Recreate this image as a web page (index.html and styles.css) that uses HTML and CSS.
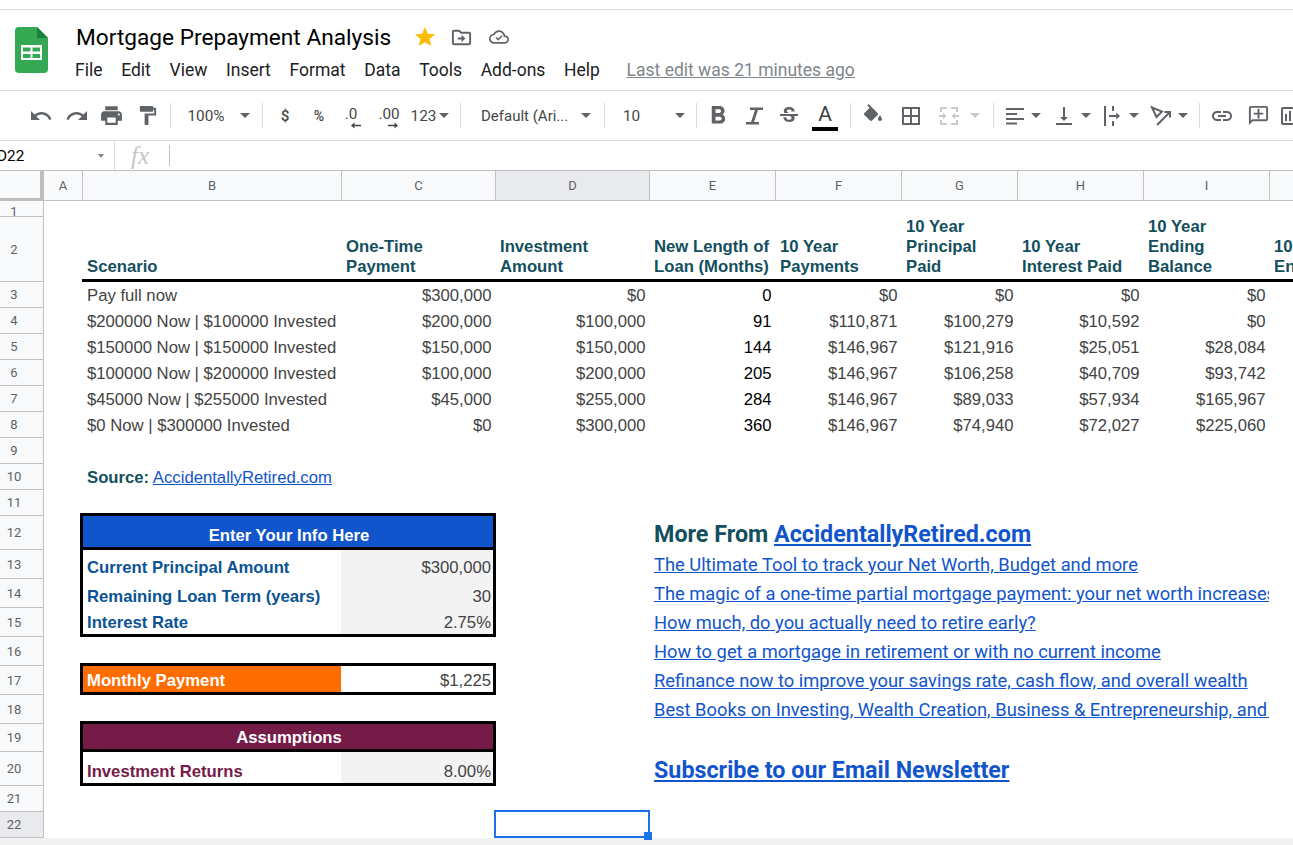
FILE: index.html
```html
<!DOCTYPE html>
<html lang="en">
<head>
<meta charset="utf-8">
<title>Mortgage Prepayment Analysis</title>
<link rel="stylesheet" href="styles.css">
</head>
<body>
<div class="app">
  <header class="head">
    <svg class="logo" viewBox="0 0 33 46"><path class="lg" d="M4 0H22L33 11V42a4 4 0 0 1-4 4H4a4 4 0 0 1-4-4V4a4 4 0 0 1 4-4z"/><path class="ld" d="M22 0L33 11H22z"/><path class="lw" d="M6 18H27V33H6zM8 20.500V24.500H15.500V20.500zM17.500 20.500V24.500H25V20.500zM8 27V31H15.500V27zM17.500 27V31H25V27z" fill-rule="evenodd"/></svg>
    <div class="titles">
      <div class="titlerow">
        <h1 class="title">Mortgage Prepayment Analysis</h1>
        <svg class="star" viewBox="0 0 24 24"><path d="M12 17.270L18.180 21l-1.640-7.030L22 9.240l-7.190-.610L12 2 9.190 8.630 2 9.240l5.460 4.730L5.820 21z"/></svg>
        <svg class="folder" viewBox="0 0 24 24"><path d="M20 6h-8l-2-2H4c-1.100 0-2 .9-2 2v12c0 1.100.9 2 2 2h16c1.100 0 2-.9 2-2V8c0-1.100-.9-2-2-2zm0 12H4V6h5.170l2 2H20v10zm-8-4H8v-2h4V9l4 4-4 4v-3z"/></svg>
        <svg class="cloud" viewBox="0 0 24 24"><path d="M19.350 10.040C18.670 6.590 15.640 4 12 4 9.110 4 6.600 5.640 5.350 8.040 2.340 8.360 0 10.910 0 14c0 3.310 2.690 6 6 6h13c2.760 0 5-2.240 5-5 0-2.640-2.050-4.780-4.650-4.960zM19 18H6c-2.210 0-4-1.790-4-4 0-2.050 1.530-3.760 3.560-3.970l1.070-.110.5-.950C8.080 7.140 9.940 6 12 6c2.620 0 4.880 1.860 5.390 4.430l.3 1.500 1.530.110c1.560.1 2.780 1.410 2.780 2.960 0 1.650-1.350 3-3 3zm-8-1.500l-3.200-3.200 1.300-1.300 1.900 1.900 4.100-4.100 1.300 1.300z"/></svg>
      </div>
      <nav class="menu"><span>File</span><span>Edit</span><span>View</span><span>Insert</span><span>Format</span><span>Data</span><span>Tools</span><span>Add-ons</span><span>Help</span><span class="lastedit">Last edit was 21 minutes ago</span></nav>
    </div>
  </header>

  <div class="toolbar">
    <span class="t w36"><svg class="i24" viewBox="0 0 24 24"><path d="M12.500 8c-2.650 0-5.050.99-6.900 2.600L2 7v9h9l-3.620-3.620c1.390-1.160 3.160-1.880 5.120-1.880 3.540 0 6.550 2.310 7.600 5.500l2.370-.78C21.080 11.030 17.150 8 12.500 8z"/></svg></span>
    <span class="t w35"><svg class="i24" viewBox="0 0 24 24"><path d="M18.400 10.600C16.550 8.990 14.150 8 11.500 8c-4.650 0-8.580 3.030-9.960 7.220L3.900 16c1.050-3.190 4.050-5.500 7.600-5.500 1.950 0 3.730.72 5.120 1.880L13 16h9V7l-3.600 3.600z"/></svg></span>
    <span class="t w35"><svg class="i25" viewBox="0 0 24 24"><path d="M19 8H5c-1.660 0-3 1.340-3 3v6h4v4h12v-4h4v-6c0-1.660-1.340-3-3-3zm-3 11H8v-5h8v5zm3-7c-.55 0-1-.45-1-1s.45-1 1-1 1 .45 1 1-.45 1-1 1zm-1-9H6v4h12V3z"/></svg></span>
    <span class="t w36"><svg class="i23" viewBox="0 0 24 24"><path d="M18 4V3c0-.55-.45-1-1-1H5c-.55 0-1 .45-1 1v4c0 .55.45 1 1 1h12c.55 0 1-.45 1-1V6h1v4H9v11c0 .55.45 1 1 1h2c.55 0 1-.45 1-1v-9h8V4h-3z"/></svg></span>
    <span class="t w10"><i class="sep"></i></span>
    <span class="t w62 tx">100%</span>
    <span class="t w16"><i class="caret"></i></span>
    <span class="t w18"><i class="sep"></i></span>
    <span class="t w28 tx strong">$</span>
    <span class="w8"></span>
    <span class="t w24 tx strong sm">%</span>
    <span class="t w40 dec"><span class="tx">.0</span><svg class="arr arrl" viewBox="0 0 10 7"><path d="M10 2.700H3.500V.5L0 3.500 3.500 6.500V4.300H10z"/></svg></span>
    <span class="t w36 dec"><span class="tx">.00</span><svg class="arr arrr" viewBox="0 0 10 7"><path d="M0 2.700H6.500V.5L10 3.500 6.500 6.500V4.300H0z"/></svg></span>
    <span class="t w33 tx">123</span>
    <span class="t w8"><i class="caret"></i></span>
    <span class="t w24"><i class="sep"></i></span>
    <span class="t w106 tx lft fnt">Default (Ari...</span>
    <span class="t w16"><i class="caret"></i></span>
    <span class="t w20"><i class="sep"></i></span>
    <span class="t w58 tx lft">10</span>
    <span class="t w16"><i class="caret"></i></span>
    <span class="t w16"><i class="sep"></i></span>
    <span class="t w28"><svg class="i30" viewBox="0 0 24 24"><path d="M15.600 10.790c.97-.67 1.650-1.770 1.650-2.790 0-2.260-1.750-4-4-4H7v14h7.040c2.090 0 3.710-1.700 3.710-3.790 0-1.520-.86-2.820-2.150-3.420zM10 6.500h3c.83 0 1.500.67 1.500 1.500s-.67 1.500-1.500 1.500h-3v-3zm3.500 9H10v-3h3.500c.83 0 1.500.67 1.500 1.500s-.67 1.500-1.500 1.500z"/></svg></span>
    <span class="t w44"><svg class="i24" viewBox="0 0 24 24"><path d="M8 3.500h13v2.500h-5l-4 12h5v2.500H4V18h5l4-12H8z"/></svg></span>
    <span class="t w26"><svg class="i24" viewBox="0 0 24 24"><path d="M6.850 7.080C6.850 4.370 9.450 3 12.240 3c1.640 0 3 .49 3.900 1.280.77.65 1.460 1.730 1.460 3.240h-3.010c0-.31-.05-.59-.15-.85-.29-.86-1.200-1.280-2.250-1.280-1.860 0-2.340 1.020-2.340 1.700 0 .48.25.88.74 1.210.38.25.77.48 1.410.7H7.390c-.21-.34-.54-.89-.54-1.920zM21 12v-2H3v2h9.620c1.150.45 1.960.75 1.960 1.970 0 1-.81 1.670-2.280 1.670-1.540 0-2.930-.54-2.930-2.510H6.400c0 .55.08 1.130.24 1.580.81 2.290 3.290 3.300 5.670 3.300 2.270 0 5.300-.89 5.300-4.050 0-.3-.01-1.160-.48-1.940H21V12z"/></svg></span>
    <span class="t w46 colorA"><span class="Aglyph">A</span><i class="Abar"></i></span>
    <span class="t w4"><i class="sep"></i></span>
    <span class="t w42"><svg class="i24" viewBox="0 0 24 24"><path d="M16.560 8.940L7.620 0 6.210 1.410l2.380 2.380-5.150 5.150c-.59.59-.59 1.540 0 2.120l5.500 5.500c.29.29.68.44 1.060.44s.77-.15 1.060-.44l5.500-5.500c.59-.58.59-1.530 0-2.120zM19 11.500s-2 2.170-2 3.500c0 1.100.9 2 2 2s2-.9 2-2c0-1.330-2-3.500-2-3.500z"/></svg></span>
    <span class="t w34"><svg class="i24" viewBox="0 0 24 24"><path d="M3 3v18h18V3H3zm8 16H5v-6h6v6zm0-8H5V5h6v6zm8 8h-6v-6h6v6zm0-8h-6V5h6v6z"/></svg></span>
    <span class="t w42"><svg class="i24 dim" viewBox="0 0 24 24"><path d="M3 3h7v2H5v3H3zM14 3h7v5h-2V5h-5zM3 16h2v3h5v2H3zM19 16h2v5h-7v-2h5zM2 11h4V8.500L9.500 12 6 15.500V13H2zM22 11h-4V8.500L14.500 12l3.500 3.500V13h4z"/></svg></span>
    <span class="t w10"><i class="caret dimc"></i></span>
    <span class="t w26"><i class="sep"></i></span>
    <span class="t w18"><svg class="i18" viewBox="0 0 18 18"><path d="M0 1H18V3H0zM0 6H11V8H0zM0 11H18V13H0zM0 15.500H11V17.500H0z"/></svg></span>
    <span class="t w24"><i class="caret"></i></span>
    <span class="t w32"><svg class="i24" viewBox="0 0 24 24"><path d="M16 13h-3V3h-2v10H8l4 4 4-4zM4 19v2h16v-2H4z"/></svg></span>
    <span class="t w12"><i class="caret"></i></span>
    <span class="w6"></span>
    <span class="t w30"><svg class="i24" viewBox="0 0 24 24"><path d="M3 2h2v20H3zM11 2h2v5h-2zM11 17h2v5h-2zM8 11h7.200V8.500L19 12l-3.800 3.500V13H8z"/></svg></span>
    <span class="t w12"><i class="caret"></i></span>
    <span class="w6"></span>
    <span class="t w30"><svg class="i24 rot" viewBox="0 0 24 24"><path d="M3 3.500L13 7.500 7.500 13zM8 21L20 9M15.500 8H21V13.500"/></svg></span>
    <span class="t w14"><i class="caret"></i></span>
    <span class="t w18"><i class="sep"></i></span>
    <span class="t w28"><svg class="i24" viewBox="0 0 24 24"><path d="M3.900 12c0-1.710 1.390-3.100 3.100-3.100h4V7H7c-2.760 0-5 2.240-5 5s2.240 5 5 5h4v-1.900H7c-1.710 0-3.100-1.390-3.100-3.100zM8 13h8v-2H8v2zm9-6h-4v1.900h4c1.710 0 3.100 1.390 3.100 3.100s-1.390 3.100-3.100 3.100h-4V17h4c2.760 0 5-2.240 5-5s-2.240-5-5-5z"/></svg></span>
    <span class="t w44"><svg class="i23" viewBox="0 0 24 24"><path d="M20 2H4c-1.100 0-2 .9-2 2v18l4-4h14c1.100 0 2-.9 2-2V4c0-1.100-.9-2-2-2zm0 14H5.170L4 17.170V4h16v12zM13 5h-2v4H7v2h4v4h2v-4h4V9h-4z"/></svg></span>
    <span class="t w20"><svg class="i24" viewBox="0 0 24 24"><path d="M19 3H5c-1.100 0-2 .9-2 2v14c0 1.100.9 2 2 2h14c1.100 0 2-.9 2-2V5c0-1.100-.9-2-2-2zm0 16H5V5h14v14zM7 10h2v7H7zm4-3h2v10h-2zm4 6h2v4h-2z"/></svg></span>
  </div>

  <div class="fbar">
    <div class="namebox"><span class="cellname">D22</span><i class="caret tiny"></i></div>
    <div class="fx">fx</div>
    <i class="fxsep"></i>
  </div>

  <div class="row colhead">
    <div class="corner"></div>
    <div class="ch cA">A</div><div class="ch">B</div><div class="ch">C</div><div class="ch sel">D</div><div class="ch">E</div><div class="ch">F</div><div class="ch">G</div><div class="ch">H</div><div class="ch">I</div><div class="ch"></div>
  </div>

  <main class="sheet">
    <div class="row r16"><div class="rn rn1">1</div></div>
    <div class="row r65"><div class="rn">2</div>
      <div class="c hd thick cB">Scenario</div>
      <div class="c hd thick cC"><span>One-Time<br>Payment</span></div>
      <div class="c hd thick cD"><span>Investment<br>Amount</span></div>
      <div class="c hd thick cE"><span>New Length of<br>Loan (Months)</span></div>
      <div class="c hd thick cF"><span>10 Year<br>Payments</span></div>
      <div class="c hd thick cG"><span>10 Year<br>Principal<br>Paid</span></div>
      <div class="c hd thick cH"><span>10 Year<br>Interest Paid</span></div>
      <div class="c hd thick cI"><span>10 Year<br>Ending<br>Balance</span></div>
      <div class="c hd thick cJ"><span>10 Year<br>Ending</span></div>
    </div>
    <div class="row r26"><div class="rn">3</div><div class="c cB">Pay full now</div><div class="c n cC">$300,000</div><div class="c n cD">$0</div><div class="c n k cE">0</div><div class="c n cF">$0</div><div class="c n cG">$0</div><div class="c n cH">$0</div><div class="c n cI">$0</div></div>
    <div class="row r26"><div class="rn">4</div><div class="c cB">$200000 Now | $100000 Invested</div><div class="c n cC">$200,000</div><div class="c n cD">$100,000</div><div class="c n k cE">91</div><div class="c n cF">$110,871</div><div class="c n cG">$100,279</div><div class="c n cH">$10,592</div><div class="c n cI">$0</div></div>
    <div class="row r26"><div class="rn">5</div><div class="c cB">$150000 Now | $150000 Invested</div><div class="c n cC">$150,000</div><div class="c n cD">$150,000</div><div class="c n k cE">144</div><div class="c n cF">$146,967</div><div class="c n cG">$121,916</div><div class="c n cH">$25,051</div><div class="c n cI">$28,084</div></div>
    <div class="row r26"><div class="rn">6</div><div class="c cB">$100000 Now | $200000 Invested</div><div class="c n cC">$100,000</div><div class="c n cD">$200,000</div><div class="c n k cE">205</div><div class="c n cF">$146,967</div><div class="c n cG">$106,258</div><div class="c n cH">$40,709</div><div class="c n cI">$93,742</div></div>
    <div class="row r26"><div class="rn">7</div><div class="c cB">$45000 Now | $255000 Invested</div><div class="c n cC">$45,000</div><div class="c n cD">$255,000</div><div class="c n k cE">284</div><div class="c n cF">$146,967</div><div class="c n cG">$89,033</div><div class="c n cH">$57,934</div><div class="c n cI">$165,967</div></div>
    <div class="row r26"><div class="rn">8</div><div class="c cB">$0 Now | $300000 Invested</div><div class="c n cC">$0</div><div class="c n cD">$300,000</div><div class="c n k cE">360</div><div class="c n cF">$146,967</div><div class="c n cG">$74,940</div><div class="c n cH">$72,027</div><div class="c n cI">$225,060</div></div>
    <div class="row r26"><div class="rn">9</div></div>
    <div class="row r26"><div class="rn">10</div><div class="c cBC"><span><b class="src">Source:</b> <a class="lnk" href="#">AccidentallyRetired.com</a></span></div></div>
    <div class="row r26"><div class="rn">11</div></div>

    <div class="row r34"><div class="rn">12</div>
      <div class="c tight mid blue bL bR bT bB cBC">Enter Your Info Here</div>
      <div class="c big cEI"><span class="teal">More From <a class="lnk" href="#">AccidentallyRetired.com</a></span></div>
    </div>
    <div class="row r29"><div class="rn">13</div>
      <div class="c tight bold navy bL cB">Current Principal Amount</div>
      <div class="c tight n gray bR cC">$300,000</div>
      <div class="c linkc cEI"><a class="lnk" href="#">The Ultimate Tool to track your Net Worth, Budget and more</a></div>
    </div>
    <div class="row r29"><div class="rn">14</div>
      <div class="c tight bold navy bL cB">Remaining Loan Term (years)</div>
      <div class="c tight n gray bR cC">30</div>
      <div class="c linkc cEI"><a class="lnk" href="#">The magic of a one-time partial mortgage payment: your net worth increases even if you invest</a></div>
    </div>
    <div class="row r29"><div class="rn">15</div>
      <div class="c tight bold navy bL bB cB">Interest Rate</div>
      <div class="c tight n gray bR bB cC">2.75%</div>
      <div class="c linkc cEI"><a class="lnk" href="#">How much, do you actually need to retire early?</a></div>
    </div>
    <div class="row r29"><div class="rn">16</div>
      <div class="c linkc cEI"><a class="lnk" href="#">How to get a mortgage in retirement or with no current income</a></div>
    </div>
    <div class="row r29"><div class="rn">17</div>
      <div class="c tight bold orange bL bT bB cB">Monthly Payment</div>
      <div class="c tight n bR bT bB cC">$1,225</div>
      <div class="c linkc cEI"><a class="lnk" href="#">Refinance now to improve your savings rate, cash flow, and overall wealth</a></div>
    </div>
    <div class="row r29"><div class="rn">18</div>
      <div class="c linkc cEI"><a class="lnk" href="#">Best Books on Investing, Wealth Creation, Business &amp; Entrepreneurship, and more</a></div>
    </div>
    <div class="row r28"><div class="rn">19</div>
      <div class="c tight mid plum bL bR bT bB cBC">Assumptions</div>
    </div>
    <div class="row r34"><div class="rn">20</div>
      <div class="c tight bold plumt bL bB cB">Investment Returns</div>
      <div class="c tight n gray bR bB cC">8.00%</div>
      <div class="c big cEI"><a class="lnk" href="#">Subscribe to our Email Newsletter</a></div>
    </div>
    <div class="row r26"><div class="rn">21</div></div>
    <div class="row r26"><div class="rn sel">22</div><div class="cursor cD"><i class="handle"></i></div></div>
  </main>
  <div class="foot"></div>
</div>
</body>
</html>
```
FILE: styles.css
```css
* { box-sizing: border-box; }
html, body { margin: 0; padding: 0; }
body { background: #fff; font-family: Roboto, sans-serif; color: #202124; }
.app { width: 1293px; height: 845px; overflow: hidden; display: flex; flex-direction: column; }

/* header */
.head { height: 82px; flex: none; margin-top: 9px; border-top: 1px solid #dadce0; border-bottom: 1px solid #dadce0; display: flex; padding: 17px 0 0 15px; }
.logo { width: 33px; height: 46px; flex: none; }
.lg { fill: #34a853; }
.ld { fill: #188038; }
.lw { fill: #fff; }
.titles { margin-left: 28px; margin-top: -5px; }
.titlerow { display: flex; align-items: center; height: 30px; }
.title { margin: 0; font-family: Roboto, sans-serif; font-weight: 400; font-size: 22.650px; color: #000; white-space: nowrap; }
.star { width: 24px; height: 24px; fill: #fbbc04; margin-left: 22px; }
.folder { width: 23px; height: 23px; fill: #5f6368; margin-left: 13px; }
.cloud { width: 20px; height: 20px; fill: #5f6368; margin-left: 16px; }
.menu { display: flex; margin-top: 7px; margin-left: -1px; font-size: 17.500px; line-height: 22px; color: #202124; white-space: nowrap; }
.menu span { margin-right: 18.700px; }
.menu .lastedit { margin-left: 8px; margin-right: 0; color: #80868b; text-decoration: underline; }

/* toolbar */
.toolbar { height: 50px; flex: none; display: flex; align-items: center; padding-left: 23px; border-bottom: 1px solid #dadce0; overflow: hidden; }
.t { display: flex; align-items: center; justify-content: center; flex: none; height: 36px; }
.w4 { width: 4px; flex: none; } .w6 { width: 6px; flex: none; } .w8 { width: 8px; flex: none; } .w10 { width: 10px; } .w12 { width: 12px; } .w14 { width: 14px; } .w16 { width: 16px; } .w18 { width: 18px; } .w20 { width: 20px; } .w24 { width: 24px; } .w26 { width: 26px; } .w28 { width: 28px; } .w30 { width: 30px; } .w32 { width: 32px; } .w33 { width: 33px; } .w34 { width: 34px; } .w35 { width: 35px; } .w36 { width: 36px; } .w40 { width: 40px; } .w42 { width: 42px; } .w44 { width: 44px; } .w46 { width: 46px; } .w58 { width: 58px; } .w62 { width: 62px; } .w106 { width: 106px; }
.t svg { fill: #5f6368; flex: none; }
.i18 { width: 18px; height: 18px; } .i23 { width: 23px; height: 23px; } .i24 { width: 24px; height: 24px; } .i25 { width: 25px; height: 25px; } .i30 { width: 30px; height: 30px; }
.t svg.dim { fill: #c8cacd; }
.t svg.rot { fill: none; stroke: #5f6368; stroke-width: 2; }
.tx { font-size: 15.300px; color: #444746; white-space: nowrap; }
.fnt { font-size: 15px; }
.strong { font-weight: 500; }
.sm { font-size: 14px; }
.lft { justify-content: flex-start; padding-left: 9px; }
.sep { display: block; width: 1px; height: 25px; background: #dadce0; }
.caret { display: block; width: 0; height: 0; border-left: 5px solid transparent; border-right: 5px solid transparent; border-top: 5px solid #5f6368; }
.dimc { border-top-color: #c8cacd; }
.dec { flex-direction: column; }
.dec .tx { line-height: 16px; margin-top: 3px; }
.t svg.arr { width: 10px; height: 7px; fill: #444746; margin-top: 0; }
.t svg.arrl { margin-left: 9px; }
.t svg.arrr { margin-left: 8px; }
.colorA { flex-direction: column; justify-content: flex-start; padding-top: 6px; }
.Aglyph { font-size: 21px; line-height: 20px; color: #3c4043; }
.Abar { display: block; width: 26px; height: 4px; background: #000; margin-top: 3px; flex: none; }

/* formula bar */
.fbar { height: 30px; flex: none; display: flex; align-items: center; border-bottom: 1px solid #c0c0c0; }
.namebox { width: 115px; height: 100%; display: flex; align-items: center; border-right: 1px solid #dadce0; }
.cellname { font-size: 15.300px; color: #000; margin-left: -3px; width: 101px; }
.tiny { border-left-width: 3.500px; border-right-width: 3.500px; border-top-width: 4px; border-top-color: #80868b; }
.fx { width: 54px; padding-left: 16px; font-family: "Liberation Serif", serif; font-style: italic; font-size: 25px; line-height: 28px; color: #c4c7c5; }
.fxsep { display: block; width: 1px; height: 21px; background: #c0c0c0; }

/* grid */
.row { display: grid; grid-template-columns: 44px 38px 259px 154px 154px 126px 126px 116px 126px 126px 24px; }
.colhead { height: 30px; flex: none; }
.corner { background: #f8f9fa; border-right: 4px solid #bdbdbd; border-bottom: 3px solid #bdbdbd; }
.ch { background: #f8f9fa; border-bottom: 1px solid #c0c0c0; border-left: 1px solid #c0c0c0; font-size: 13px; color: #5f6368; display: flex; align-items: center; justify-content: center; }
.ch.cA { border-left: 0; }
.ch.sel { background: #e8eaed; }
.sheet { flex: none; }
.r16 { height: 16px; } .r26 { height: 26px; } .r28 { height: 28px; } .r29 { height: 29px; } .r34 { height: 34px; } .r65 { height: 65px; }
.rn { grid-column: 1; background: #f8f9fa; border-right: 1px solid #c0c0c0; border-bottom: 1px solid #c0c0c0; font-size: 13px; color: #5f6368; display: flex; align-items: center; justify-content: center; padding-right: 15px; overflow: hidden; }
.rn1 { align-items: flex-start; padding-top: 4px; line-height: 14px; }
.rn.sel { background: #e8eaed; }

.cB { grid-column: 3; } .cC { grid-column: 4; } .cD { grid-column: 5; } .cE { grid-column: 6; } .cF { grid-column: 7; } .cG { grid-column: 8; } .cH { grid-column: 9; } .cI { grid-column: 10; } .cJ { grid-column: 11; }
.cBC { grid-column: 3 / 5; }
.cEI { grid-column: 6 / 11; }

.c { display: flex; align-items: flex-end; padding: 0 3.500px 2px 5px; font-family: "Liberation Sans", Arial, sans-serif; font-size: 16.700px; line-height: 20px; color: #434343; white-space: nowrap; overflow: hidden; min-width: 0; }
.n { justify-content: flex-end; }
.k { color: #000; }
.hd { font-weight: 700; color: #134f5c; }
.thick { border-bottom: 3px solid #000; }
.cJ { padding-right: 0; }
.src { color: #134f5c; }
.teal { color: #134f5c; }
.lnk { color: #1155cc; text-decoration: underline; }

.tight { padding-bottom: 1px; padding-right: 2px; }
.mid { justify-content: center; font-weight: 700; color: #fff; }
.bold { font-weight: 700; }
.blue { background: #1155cc; }
.plum { background: #741b47; }
.orange { background: #ff6d01; color: #fff; }
.navy { color: #0b5394; }
.plumt { color: #741b47; }
.gray { background: #f3f3f3; }
.bL { border-left: 3px solid #000; margin-left: -2px; padding-left: 4px; }
.bR { border-right: 3px solid #000; margin-right: -1px; }
.bT { border-top: 3px solid #000; margin-top: -3px; }
.bB { border-bottom: 3px solid #000; }

.big, .linkc { font-family: Roboto, sans-serif; }
.linkc { font-size: 18.320px; line-height: 22px; padding-bottom: 3px; }
.big { font-size: 23.300px; line-height: 27px; font-weight: 700; }

.cursor { position: relative; border: 2px solid #1a73e8; margin: -2px -1px 0 -1px; }
.handle { position: absolute; right: -4px; bottom: -4px; width: 8px; height: 8px; background: #1a73e8; }
.foot { flex: 1; background: #f1f1f1; }
```
